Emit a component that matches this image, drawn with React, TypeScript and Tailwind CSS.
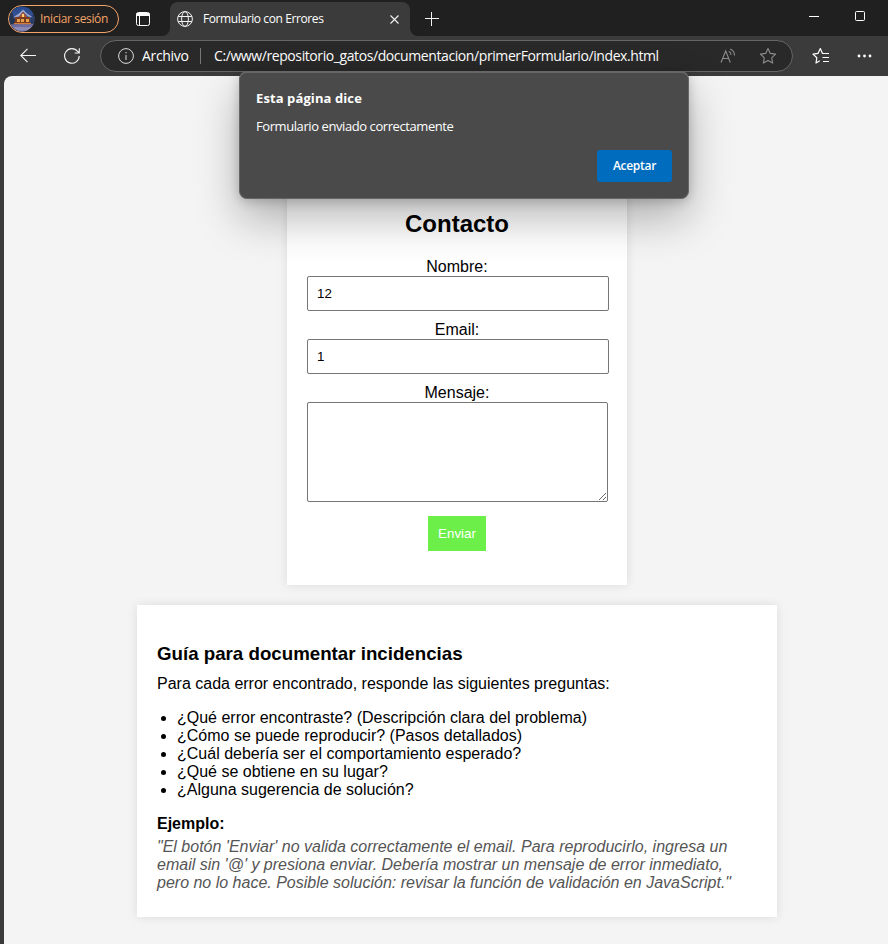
import React from "react";

const ui = "font-['Open_Sans','Noto_Sans',sans-serif]";

function Avatar() {
  return (
    <svg width="26" height="26" viewBox="0 0 26 26" className="shrink-0">
      <defs>
        <clipPath id="avatarClip"><circle cx="13" cy="13" r="12.5" /></clipPath>
        <linearGradient id="sky" x1="0" y1="0" x2="0" y2="1">
          <stop offset="0" stopColor="#244a92" />
          <stop offset=".55" stopColor="#3d5490" />
          <stop offset=".7" stopColor="#6b6a9c" />
          <stop offset="1" stopColor="#8c8bb6" />
        </linearGradient>
        <filter id="soft"><feGaussianBlur stdDeviation=".45" /></filter>
      </defs>
      <g clipPath="url(#avatarClip)">
        <rect width="26" height="26" fill="url(#sky)" />
        <g filter="url(#soft)">
          <path d="M0 4l3 2 2 6 4 4v4H0z" fill="#263650" />
          <path d="M22 10l4-3v11h-5z" fill="#2b3d66" />
          <path d="M6 11h15v7H6z" fill="#7a3d24" />
          <path d="M4 11.500l6-4 4-4 4 4 6 4-5-1-5-5-4 5z" fill="#a3a9cb" />
          <path d="M10 11l4-5 4 5z" fill="#b4562c" />
          <path d="M8 13h3v3H8zM12 13h3v3h-3zM17 13h3v3h-3z" fill="#e8a04c" />
          <path d="M13 8h2v3h-2z" fill="#ffd27a" />
          <path d="M5 17h17v1.500H5z" fill="#d17b3d" />
          <path d="M0 18.500c7-1 16 1 26-1V26H0z" fill="#6d6c9c" />
          <path d="M3 21.500c7-2 12 1 20-1l-4 4H8z" fill="#8c8ab4" />
        </g>
      </g>
    </svg>
  );
}

function TabStrip() {
  return (
    <header className={`flex h-9 bg-[#202020] ${ui}`}>
      <div className="ml-2 mt-[5px] flex h-7 w-[111px] items-center rounded-full border border-[#f5a468]">
        <Avatar />
        <span className="ml-[5px] whitespace-nowrap text-[12px] tracking-[-0.36px] text-[#f5a468]">Iniciar sesión</span>
      </div>
      <svg className="ml-4 mt-[11px] shrink-0" width="16" height="16" viewBox="0 0 16 16" fill="none" stroke="#fff">
        <rect x="1.500" y="1.500" width="13" height="13" rx="2" />
        <path d="M1.500 3h13M2 4h12" strokeWidth="2" />
        <path d="M4.500 5v9" />
      </svg>
      <svg className="ml-[11px] mt-7 shrink-0" width="8" height="8"><path d="M8 0v8H0a8 8 0 0 0 8-8z" fill="#3b3b3b" /></svg>
      <div className="mt-[2px] flex h-[34px] w-[240px] shrink-0 items-center rounded-t-lg bg-[#3b3b3b] pl-[7px]">
        <svg width="16" height="16" viewBox="0 0 16 16" fill="none" stroke="#f2f2f2">
          <circle cx="8" cy="8" r="7.400" />
          <ellipse cx="8" cy="8" rx="3.400" ry="7.400" />
          <path d="M1.200 5.500h13.600M1.200 10.500h13.600" />
        </svg>
        <span className="ml-[10px] w-[180px] whitespace-nowrap text-[12px] tracking-[-0.4px] text-white">Formulario con Errores</span>
        <svg className="ml-[7px]" width="9" height="9" viewBox="0 0 9 9" stroke="#f2f2f2" strokeWidth="1.100"><path d="M.5.5l8 8M8.500.5l-8 8" /></svg>
      </div>
      <svg className="mt-7 shrink-0" width="8" height="8"><path d="M0 0v8h8a8 8 0 0 1-8-8z" fill="#3b3b3b" /></svg>
      <svg className="ml-[7px] mt-3 shrink-0" width="14" height="14" stroke="#f2f2f2"><path d="M0 6.500h14M6.500 0v14" /></svg>
      <div className="ml-auto flex">
        <svg className="mt-[11px]" width="10" height="10" stroke="#fff"><path d="M0 5.500h10" /></svg>
        <svg className="ml-9 mr-[23px] mt-[11px]" width="10" height="10" fill="none" stroke="#fff"><rect x=".5" y=".5" width="9" height="9" rx="1" /></svg>
      </div>
    </header>
  );
}

function Toolbar() {
  return (
    <nav className={`flex h-10 bg-[#3b3b3b] ${ui}`}>
      <svg className="ml-5 mt-3 shrink-0" width="16" height="15" fill="none" stroke="#f5f5f5" strokeWidth="1.100"><path d="M16 7.500H.8M7.500.8L.8 7.500l6.700 6.700" /></svg>
      <svg className="ml-7 mt-3 shrink-0" width="16" height="16" viewBox="0 0 16 16" fill="none" stroke="#f5f5f5" strokeWidth="1.100"><path d="M15.200 8A7.300 7.300 0 1 1 13.700 3.500L15.300 5M15.300.3V5h-4.600" /></svg>
      <div className="ml-5 mt-1 flex h-8 w-[693px] shrink-0 items-center rounded-full border border-[#666] bg-[#292929] pl-[17px]">
        <svg width="16" height="16" viewBox="0 0 16 16" fill="none" stroke="#ddd"><circle cx="8" cy="8" r="7.400" /><path d="M8 7v5M8 4v1.300" /></svg>
        <span className="ml-2 w-[58px] whitespace-nowrap text-[14px] leading-5 tracking-[-0.32px] text-white">Archivo</span>
        <span className="h-4 w-px bg-[#777]" />
        <span className="ml-[13px] w-[504px] whitespace-nowrap text-[14px] leading-5 tracking-[-0.41px] text-white">C:/www/repositorio_gatos/documentacion/primerFormulario/index.html</span>
        <svg className="ml-[2px] shrink-0" width="17" height="16" fill="none" stroke="#8c8c8c" strokeWidth="1.100">
          <path d="M1 14.500L5.700 3l4.600 11.500M2.600 10.500h6.200M8.800 3.200c1.500.8 2.200 2 2.300 3.800M10.200 1c3 1.300 4.300 3.300 4.300 6.500" />
        </svg>
        <svg className="ml-[22px] shrink-0" width="18" height="18" viewBox="0 0 18 18" fill="none" stroke="#8c8c8c" strokeWidth="1.100" strokeLinejoin="round"><path d="M9 1.500l2.300 4.900 5.300.7-3.900 3.700 1 5.300L9 13.500l-4.700 2.600 1-5.300-3.900-3.700 5.300-.7z" /></svg>
      </div>
      <svg className="ml-[19px] mt-[11px] shrink-0" width="18" height="18" viewBox="0 0 18 18" fill="none" stroke="#fff" strokeWidth="1.200" strokeLinejoin="round">
        <path d="M7.800 13.700L4 16l.8-5.200L1 7.100l5-.7L8.300 1.600l2.200 4.900h6.500M10.500 10.500H17M11 14.500h6" />
      </svg>
      <svg className="ml-[27px] mt-[18px] shrink-0" width="15" height="4" fill="#fff"><circle cx="2" cy="2" r="1.400" /><circle cx="7.500" cy="2" r="1.400" /><circle cx="13" cy="2" r="1.400" /></svg>
    </nav>
  );
}

function Alert() {
  return (
    <div role="dialog" className={`absolute left-[239px] top-[71px] flex h-32 w-[450px] flex-col rounded-lg border border-t-2 border-[#666] bg-[#4a4a4a] px-4 pt-[15px] text-white shadow-[0_20px_44px_rgba(0,0,0,0.28),0_2px_12px_rgba(0,0,0,0.2)] ${ui}`}>
      <h1 className="whitespace-nowrap text-[13px] font-bold leading-5 tracking-[0.1px]">Esta página dice</h1>
      <p className="mt-2 whitespace-nowrap text-[13px] leading-5 tracking-[-0.42px]">Formulario enviado correctamente</p>
      <button className="mt-[14px] h-8 w-[75px] self-end rounded-[3px] bg-[#006cbe] text-[12px] font-semibold tracking-[-0.28px]">Aceptar</button>
    </div>
  );
}

function ContactForm() {
  return (
    <form className="flex h-[415px] w-[340px] flex-col items-start bg-white px-5 pt-10 shadow-[0_0_10px_rgba(0,0,0,0.1)]">
      <h2 className="w-full text-center text-[24px] font-bold leading-7">Contacto</h2>
      <label htmlFor="nombre" className="mt-5 w-full text-center leading-[18px]">Nombre:</label>
      <input id="nombre" defaultValue="12" className="h-[35px] w-[302px] shrink-0 rounded-[2px] border border-[#767676] px-[9px] text-[13.333px]" />
      <label htmlFor="email" className="mt-[10px] w-full text-center leading-[18px]">Email:</label>
      <input id="email" defaultValue="1" className="h-[35px] w-[302px] shrink-0 rounded-[2px] border border-[#767676] px-[9px] text-[13.333px]" />
      <label htmlFor="mensaje" className="mt-[10px] w-full text-center leading-[18px]">Mensaje:</label>
      <textarea id="mensaje" className="h-[100px] w-[301px] shrink-0 rounded-[2px] border border-[#767676]" />
      <button type="button" className="mt-[14px] h-[35px] w-[58px] self-center bg-[#6cef49] text-[13.333px] text-white">Enviar</button>
    </form>
  );
}

const questions = [
  "¿Qué error encontraste? (Descripción clara del problema)",
  "¿Cómo se puede reproducir? (Pasos detallados)",
  "¿Cuál debería ser el comportamiento esperado?",
  "¿Qué se obtiene en su lugar?",
  "¿Alguna sugerencia de solución?",
];

function Guide() {
  return (
    <section className="mt-5 h-[312px] w-[640px] bg-white px-5 pt-[38px] shadow-[0_0_10px_rgba(0,0,0,0.1)]">
      <h3 className="text-[18.72px] font-bold leading-[22px]">Guía para documentar incidencias</h3>
      <p className="mt-[10px] leading-[18px]">Para cada error encontrado, responde las siguientes preguntas:</p>
      <ul className="mt-4 list-disc pl-5 leading-[18px]">
        {questions.map((q) => <li key={q}>{q}</li>)}
      </ul>
      <p className="mt-4 font-bold leading-[18px]">Ejemplo:</p>
      <p className="mt-[5px] italic leading-[18px] text-[#555]">
        "El botón 'Enviar' no valida correctamente el email. Para reproducirlo, ingresa un<br />
        email sin '@' y presiona enviar. Debería mostrar un mensaje de error inmediato,<br />
        pero no lo hace. Posible solución: revisar la función de validación en JavaScript."
      </p>
    </section>
  );
}

export default function App() {
  return (
    <div className="relative flex h-[944px] w-[888px] flex-col overflow-hidden bg-[#3b3b3b]">
      <TabStrip />
      <Toolbar />
      <main className="ml-1 flex flex-1 flex-col rounded-tl-lg bg-[#f4f4f4] pl-[133px] pt-[94px] font-['Liberation_Sans',Arial,sans-serif] text-[16px] text-black">
        <div className="flex w-[640px] flex-col items-center">
          <ContactForm />
          <Guide />
        </div>
      </main>
      <Alert />
    </div>
  );
}
